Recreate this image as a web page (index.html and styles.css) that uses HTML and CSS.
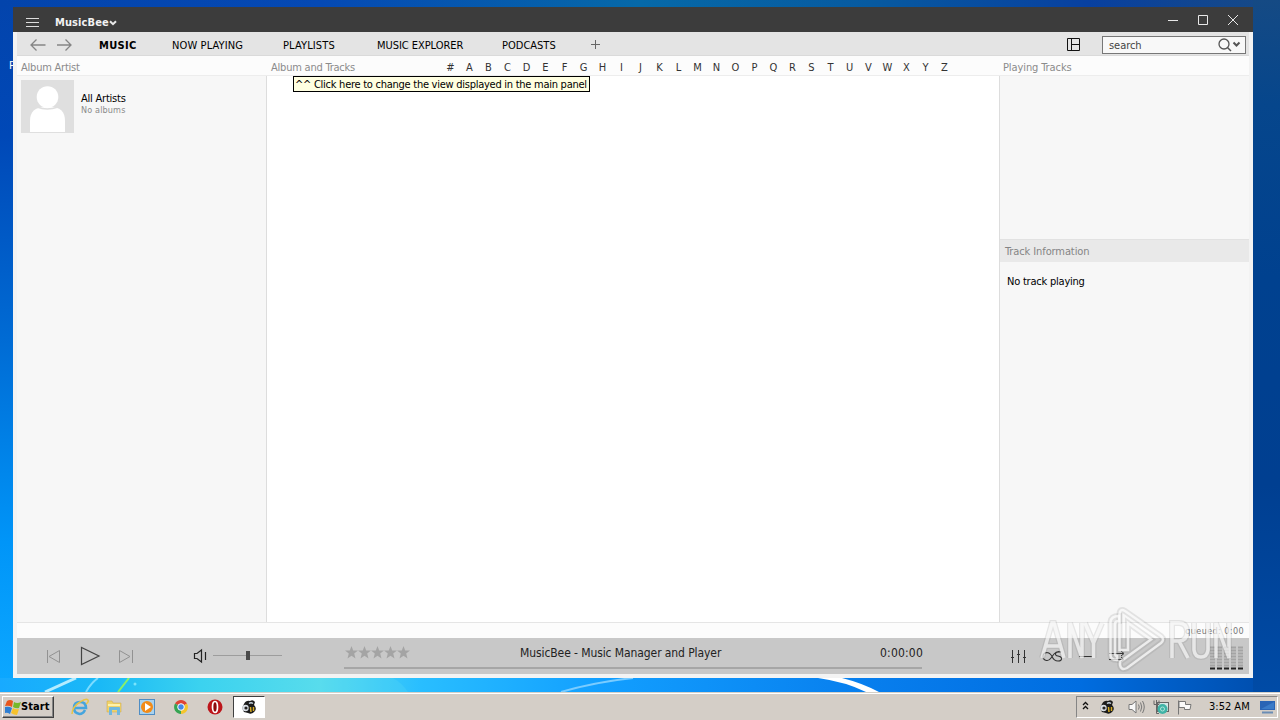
FILE: index.html
```html
<!DOCTYPE html>
<html lang="en">
<head>
    <meta charset="UTF-8">
    <title>MusicBee</title>
    <link rel="stylesheet" href="styles.css">
</head>
<body>
    <div class="desktop">
        <div class="edge edge-left"></div>
        <div class="edge edge-top"></div>
        <div class="edge edge-right"></div>
        <svg class="streaks" width="1280" height="14" viewBox="0 0 1280 14">
            <path d="M45 14L76 0" stroke="#b4ecff" stroke-width="3"/>
            <path d="M86 14Q91 5 98 0" stroke="#7bdcff" stroke-width="2" fill="none"/>
            <path d="M118 14L129 0" stroke="#8af06a" stroke-width="2"/>
            <circle cx="135" cy="6" r="1.5" fill="#7ae4fc"/>
            <path d="M393 0Q402 5 408 14H320V0Z" fill="#5cdcf4" opacity=".25"/>
            <path d="M561 14Q595 4 633 0" stroke="#7accff" stroke-width="2" fill="none"/>
            <path d="M818 0H842Q862 5 879 14H866Q846 4 818 0Z" fill="#fff"/>
        </svg>
        <span class="desktop-label">P</span>
    </div>

    <div class="window">
        <div class="titlebar">
            <svg class="menu-icon" width="14" height="11" viewBox="0 0 14 11" stroke="#ddd"><path d="M0 1.5H13M0 5.5H13M0 9.5H13"/></svg>
            <span class="app-name">MusicBee</span>
            <svg class="app-caret" width="8" height="6" viewBox="0 0 8 6" fill="none" stroke="#e8e8e8" stroke-width="2"><path d="M1 1.2L4 4.2L7 1.2"/></svg>
            <svg class="win-buttons" width="72" height="12" viewBox="0 0 72 12" fill="none" stroke="#e8e8e8">
                <path d="M0 6.5H10M30.5 1.5H39.5V10.5H30.5ZM60 1L70 11M70 1L60 11"/>
            </svg>
        </div>

        <div class="app">
            <div class="tabs">
                <svg class="nav-arrows" width="42" height="12" viewBox="0 0 42 12" fill="none" stroke="#858585" stroke-width="1.3">
                    <path d="M6.500 .5L1 6L6.500 11.500M1 6H15.500M35.500 .5L41 6L35.500 11.500M41 6H27"/>
                </svg>
                <span class="tab active">MUSIC</span>
                <span class="tab tab-now">NOW PLAYING</span>
                <span class="tab tab-lists">PLAYLISTS</span>
                <span class="tab tab-explorer">MUSIC EXPLORER</span>
                <span class="tab tab-podcasts">PODCASTS</span>
                <svg width="9" height="9" viewBox="0 0 9 9" stroke="#666"><path d="M0 4.500H9M4.500 0V9"/></svg>
                <svg class="layout-icon" width="13" height="13" viewBox="0 0 13 13" fill="none" stroke="#111"><path d="M.5 .5H12.500V12.500H.5ZM4.500 .5V12.500M4.500 6.500H12.500"/></svg>
                <div class="search">
                    <span>search</span>
                    <svg width="23" height="14" viewBox="0 0 23 14" fill="none" stroke="#555">
                        <circle cx="6" cy="6" r="5" stroke-width="1.300"/>
                        <path d="M9.500 9.500L13 13" stroke-width="1.500"/>
                        <path d="M15.500 4.500L18.500 7.500L21.500 4.500" stroke-width="2"/>
                    </svg>
                </div>
            </div>

            <div class="headers">
                <span class="head-artist">Album Artist</span>
                <span class="head-album">Album and Tracks</span>
                <div class="letters">
                    <span>#</span><span>A</span><span>B</span><span>C</span><span>D</span><span>E</span><span>F</span><span>G</span><span>H</span><span>I</span><span>J</span><span>K</span><span>L</span><span>M</span><span>N</span><span>O</span><span>P</span><span>Q</span><span>R</span><span>S</span><span>T</span><span>U</span><span>V</span><span>W</span><span>X</span><span>Y</span><span>Z</span>
                </div>
                <span class="head-playing">Playing Tracks</span>
            </div>

            <div class="panels">
                <div class="artists">
                    <svg class="avatar" width="53" height="53" viewBox="0 0 53 53">
                        <rect width="53" height="53" fill="#dfdfdf"/>
                        <circle cx="26.500" cy="17" r="10.800" fill="#fff"/>
                        <path d="M9 52V41Q9 27 24 27H30Q44 27 44 41V52Z" fill="#fff"/>
                        <path d="M16 27Q26 31 37 27" stroke="#dfdfdf" stroke-width="1.500" fill="none"/>
                    </svg>
                    <div class="artist">
                        <span class="artist-name">All Artists</span>
                        <span class="artist-count">No albums</span>
                    </div>
                </div>
                <div class="albums"></div>
                <div class="side">
                    <div class="queue"></div>
                    <div class="info-head">Track Information</div>
                    <div class="info-text">No track playing</div>
                </div>
            </div>

            <div class="status">queued: 0:00</div>

            <div class="player">
                <svg class="transport" width="88" height="20" viewBox="0 0 88 20" fill="none">
                    <path d="M1.500 4V17M13.500 4.500V16.500L3 10.500ZM73.500 4.500V16.500L84 10.500ZM86.500 4V17" stroke="#929292"/>
                    <path d="M35.500 1.500V18.500L53 10Z" stroke="#444" stroke-width="1.200"/>
                </svg>
                <svg class="volume" width="90" height="16" viewBox="0 0 90 16" fill="none">
                    <path d="M1.500 5.500H4L8.500 2V14L4 10.500H1.500ZM12.500 4V12" stroke="#222" stroke-width="1.200"/>
                    <path d="M20 7.500H89" stroke="#9d9d9d"/>
                    <rect x="53" y="3" width="4" height="9" fill="#4a4a4a"/>
                </svg>
                <div class="now">
                    <div class="now-row">
                        <svg width="66" height="14" viewBox="0 0 66 14" fill="#a4a4a4">
                            <defs><path id="star" d="M6.500 0L8.200 4.600H13L9.200 7.600L10.500 12.500L6.500 9.700L2.500 12.500L3.800 7.600L0 4.600H4.800Z"/></defs>
                            <use href="#star"/><use href="#star" x="13"/><use href="#star" x="26"/><use href="#star" x="39"/><use href="#star" x="52"/>
                        </svg>
                        <span class="now-title">MusicBee - Music Manager and Player</span>
                        <span class="now-time">0:00:00</span>
                    </div>
                    <div class="progress"></div>
                </div>
                <svg class="tools" width="118" height="16" viewBox="0 0 118 16" fill="none" stroke="#333">
                    <path d="M2.500 2V15M8.500 2V15M14.500 2V15M1 9.500H4M7 6.500H10M13 9.500H16"/>
                    <path d="M51 4Q47 2.500 44 6L41 10Q39 13 36.500 12.500Q33 12 33 8.500Q33 5 36.500 4.500Q40 4.500 42 8.500Q44 13 48 13Q52 13 51.500 10Q51 8.500 48 8Q45 7.500 45.500 5.500Q46 3.500 51 4" stroke-width="1.100"/>
                    <path d="M69 8.500H82M99 5.500H113M99 11.500H113M111 3L114 5.500L111 8M111 9L114 11.500L111 14"/>
                </svg>
                <svg class="meter" width="34" height="25" viewBox="0 0 34 25" fill="none">
                    <path d="M0 2.500H34M0 5.500H34M0 8.500H34M0 11.500H34M0 14.500H34M0 17.500H34M0 20.500H34" stroke="#a4a4a4" stroke-width="2" stroke-dasharray="5 2"/>
                    <path d="M0 23.500H34" stroke="#222" stroke-width="2" stroke-dasharray="5 2"/>
                </svg>
            </div>
        </div>
    </div>

    <div class="tooltip">^^ Click here to change the view displayed in the main panel</div>

    <svg class="watermark" width="206" height="76" viewBox="0 0 206 76" fill="none">
        <defs>
            <g id="mark">
                <path d="M3 56L13 21H15L25 56M7 44H21M31 56V21L43 56V21M46 21L54.500 41L63 21M54.500 41V56"/>
                <path d="M133 56V21H140Q148 21 148 30Q148 39 140 39H133M140 39L149 56M155 21V48Q156 55 162 55Q168 55 169 48V21M177 56V21L190 56V21"/>
            </g>
            <g id="play">
                <path d="M80 19V14Q72 14 71.500 20V53Q71.500 58 78 58V54Q76 54 76 51V22Q76 19 80 19Z"/>
                <path d="M80.500 48V12Q81 6 86 9L122 34Q126 37.500 122 41L88 66Q82 69 81 63V60L112 37.500L89 21V48Z"/>
            </g>
        </defs>
        <g stroke="#777" stroke-opacity=".17" stroke-width="6"><use href="#mark"/><use href="#play"/></g>
        <use href="#mark" stroke="#fff" stroke-opacity=".65" stroke-width="3.500"/>
        <use href="#play" stroke="#fff" stroke-opacity=".72" stroke-width="2.500"/>
    </svg>

    <div class="taskbar">
        <div class="start">
            <svg width="16" height="16" viewBox="0 0 16 16">
                <path d="M2 2Q5 0 8 2L7 8Q4 6 0 7Z" fill="#e8561c"/>
                <path d="M9 3Q12 5 16 3L14 9Q11 10 8 8Z" fill="#76b82c"/>
                <path d="M0 8Q4 7 7 9L5 15Q2 13 0 14Z" fill="#2e7ed2"/>
                <path d="M8 9Q11 11 14 10L12 16Q9 16 6 14Z" fill="#f6c22c"/>
            </svg>
            <span>Start</span>
        </div>
        <div class="pinned">
            <svg width="18" height="18" viewBox="0 0 18 18" fill="none">
                <path d="M14 12Q12 16 8.500 16Q3 15 3 10Q3 4 9 4Q15 4 15 10H4" stroke="#45a5de" stroke-width="2.600"/>
                <path d="M1 16Q1 9 9 4Q15 0 17 2Q18 4 15 6" stroke="#e8c446" stroke-width="1.500"/>
            </svg>
            <svg width="18" height="18" viewBox="0 0 18 18">
                <path d="M2 3H7L8 5H16V14H2Z" fill="#f0d36b" stroke="#cda640" stroke-width=".5"/>
                <path d="M3 7H15" stroke="#fff2aa" stroke-width="2"/>
                <path d="M4 17V10Q4 9 5 9H14Q15 9 15 10V17H12V12H7V17Z" fill="#71b8df"/>
            </svg>
            <svg width="18" height="18" viewBox="0 0 18 18">
                <rect x="1.500" y="1.500" width="15" height="15" fill="#a9d2ee" stroke="#4f8dc4"/>
                <circle cx="9" cy="9" r="6" fill="#f28b18"/>
                <path d="M7 5L13 9L7 13Z" fill="#fff"/>
            </svg>
            <svg width="18" height="18" viewBox="0 0 18 18">
                <path d="M9 9L3 5.500A7 7 0 0 1 15 5.500Z" fill="#de4435"/>
                <path d="M9 9L3 5.500A7 7 0 0 0 9 16Z" fill="#36a452"/>
                <path d="M9 9L15 5.500A7 7 0 0 1 9 16Z" fill="#f4c52d"/>
                <circle cx="9" cy="9" r="3.300" fill="#4389e8" stroke="#fff"/>
            </svg>
            <svg width="18" height="18" viewBox="0 0 18 18">
                <circle cx="9" cy="9" r="7.500" fill="#bd151a"/>
                <ellipse cx="9" cy="9" rx="2.500" ry="5.500" fill="#8e090d" stroke="#fff" stroke-width="1.700"/>
            </svg>
        </div>
        <div class="task">
            <svg width="16" height="16" viewBox="0 0 16 16">
                <g id="bee">
                    <path d="M3 5Q5 1 9 2Q12 0 14 3L13 6Q16 9 14 12Q11 16 7 14L3 13Q0 9 3 5Z" fill="#1b1b1b"/>
                    <circle cx="4.500" cy="9" r="3.200" fill="#d9dee4"/>
                    <circle cx="5" cy="9" r="1.600" fill="#222"/>
                    <path d="M9.500 8L10 13M12.500 8L12.500 12" stroke="#d6ab24" stroke-width="1.500"/>
                    <path d="M8 4.500Q10 3 12 4.500" stroke="#c7d4e0" stroke-width="1.500" fill="none"/>
                </g>
            </svg>
        </div>
        <div class="tray">
            <svg class="tray-more" width="7" height="9" viewBox="0 0 7 9" fill="none" stroke="#111" stroke-width="1.300"><path d="M1 4L3.500 1.500L6 4M1 8L3.500 5.500L6 8"/></svg>
            <svg class="tray-bee" width="16" height="16" viewBox="0 0 16 16"><use href="#bee"/></svg>
            <svg class="tray-sound" width="17" height="14" viewBox="0 0 17 14" fill="none" stroke="#777">
                <path d="M1 4.500H4L8 1V13L4 9.500H1Z" fill="#f8f8f8"/>
                <path d="M10.500 4.500Q12 7 10.500 9.500M12.500 2.500Q15 7 12.500 11.500M14.500 1Q18 7 14.500 13"/>
            </svg>
            <svg class="tray-net" width="16" height="16" viewBox="0 0 16 16" fill="none">
                <rect x="4.500" y="3.500" width="11" height="9" fill="#d5e7e6" stroke="#666"/>
                <circle cx="9.500" cy="10" r="5" fill="#3fb3a6"/>
                <circle cx="9.500" cy="10" r="2" stroke="#b0e4da"/>
                <path d="M1 1.500V5.500H6V1.500M3.500 1V5M3.500 6V14.500H6" stroke="#666"/>
            </svg>
            <svg class="tray-flag" width="15" height="15" viewBox="0 0 15 15" fill="#fafafa" stroke="#777"><path d="M1.500 .5V14.500M2 1.500H8.500V4.500H14L13 9.500H7.500V7.500H2Z"/></svg>
            <span class="clock">3:52 AM</span>
            <svg class="tray-desk" width="15" height="13" viewBox="0 0 15 13"><path d="M0 0H15V9H0Z" fill="#2a64b5"/><path d="M1 8L14 1V8Z" fill="#3b7bc8"/><path d="M2 11.500H13" stroke="#6a8db4" stroke-width="2"/></svg>
        </div>
    </div>
</body>
</html>
```
FILE: styles.css
```css
body {
    margin: 0;
    width: 1280px;
    height: 720px;
    overflow: hidden;
    position: relative;
    font-family: "DejaVu Sans Condensed", "DejaVu Sans", sans-serif;
    font-stretch: condensed;
    font-size: 11px;
    line-height: 14px;
    letter-spacing: -0.22px;
    color: #111;
    white-space: nowrap;
}
svg {
    display: block;
    flex: none;
}
/* desktop */
.desktop {
    position: absolute;
    inset: 0;
    background: linear-gradient(to right, #18aaff 0, #1ab9f6 100px, #3bd2ef 200px, #58dcec 320px, #29beff 420px, #129fff 600px, #087fee 860px, #006de0 1080px, #004ba9 1280px);
}
.edge {
    position: absolute;
}
.edge-left {
    left: 0;
    top: 0;
    width: 13px;
    height: 678px;
    background: linear-gradient(#0344ac, #0048b7 20%, #006bd4 50%, #0095f8 80%, #0ca7ff);
}
.edge-top {
    left: 0;
    top: 0;
    width: 1280px;
    height: 7px;
    background: linear-gradient(to right, #0344ac, #0549b4 25%, #0669a8 50%, #075aa0 68%, #0840a0 85%, #174a84);
}
.edge-right {
    left: 1253px;
    top: 0;
    width: 27px;
    height: 692px;
    background: linear-gradient(#154a84, #06468c 15%, #00418f 40%, #003f91 70%, #004ba6);
}
.streaks {
    position: absolute;
    left: 0;
    top: 678px;
}
.desktop-label {
    position: absolute;
    left: 9px;
    top: 59px;
    color: #fff;
}
/* window */
.window {
    position: absolute;
    left: 13px;
    top: 7px;
    width: 1240px;
    height: 671px;
    background: #f3f3f3;
}
.titlebar {
    display: flex;
    align-items: center;
    height: 25px;
    padding: 5px 13px 0 13px;
    box-sizing: border-box;
    background: #3c3c3c;
    color: #f2f2f2;
}
.app-name {
    margin-left: 15px;
    width: 54px;
    padding-top: 1px;
    font-weight: bold;
    letter-spacing: 0.1px;
}
.app-caret {
    margin-top: 1px;
}
.win-buttons {
    margin-left: auto;
    margin-bottom: 5px;
}
.app {
    margin: 0 4px;
}
.tabs {
    display: flex;
    align-items: center;
    height: 24px;
    padding: 2px 3px 0 13px;
    box-sizing: border-box;
    background: #e4e4e4;
    border-bottom: 1px solid #dadada;
    color: #000;
}
.tab {
    width: 73px;
    padding-top: 2px;
    letter-spacing: 0;
}
.active {
    margin-left: 27px;
    font-weight: bold;
    letter-spacing: 0.3px;
}
.tab-now {
    width: 111px;
    letter-spacing: 0.12px;
}
.tab-lists {
    width: 94px;
    letter-spacing: 0.12px;
}
.tab-explorer {
    width: 125px;
    letter-spacing: -0.05px;
}
.tab-podcasts {
    width: 89px;
}
.layout-icon {
    margin-left: auto;
}
.search {
    display: flex;
    align-items: center;
    justify-content: space-between;
    width: 144px;
    height: 18px;
    margin-left: 22px;
    padding: 0 4px 0 6px;
    box-sizing: border-box;
    border: 1px solid #777;
    background: #f8f8f8;
    letter-spacing: -0.05px;
    color: #444;
}
.search span {
    padding-top: 2px;
}
.headers {
    display: flex;
    align-items: center;
    height: 20px;
    padding: 5px 0 0 4px;
    box-sizing: border-box;
    background: #fcfcfc;
    border-bottom: 1px solid #ededed;
    color: #8b8b8b;
}
.head-artist {
    width: 250px;
}
.head-album {
    width: 170px;
}
.letters {
    display: grid;
    grid-template-columns: repeat(27, 19px);
    letter-spacing: 0;
    color: #333;
    text-align: center;
}
.head-playing {
    margin-left: 49px;
    letter-spacing: -0.1px;
}
.panels {
    display: flex;
    height: 546px;
}
.artists {
    display: flex;
    align-items: flex-start;
    width: 250px;
    padding: 4px;
    box-sizing: border-box;
    background: #f7f7f7;
    border-right: 1px solid #ddd;
}
.artist {
    display: flex;
    flex-direction: column;
    margin: 12px 0 0 7px;
    color: #000;
}
.artist-count {
    font-size: 9px;
    line-height: 9px;
    letter-spacing: 0.15px;
    color: #8b8b8b;
}
.albums {
    width: 732px;
    background: #fff;
}
.side {
    width: 250px;
    box-sizing: border-box;
    background: #f7f7f7;
    border-left: 1px solid #ddd;
}
.queue {
    height: 163px;
}
.info-head {
    height: 23px;
    padding-left: 5px;
    box-sizing: border-box;
    border-top: 1px solid #e2e2e2;
    background: #e9e9e9;
    line-height: 23px;
    letter-spacing: -0.1px;
    color: #858585;
}
.info-text {
    padding: 13px 0 0 7px;
    color: #000;
}
.status {
    height: 16px;
    padding: 1px 5px 0 0;
    box-sizing: border-box;
    border-top: 1px solid #e5e5e5;
    background: #fcfcfc;
    font-size: 9px;
    letter-spacing: 0.4px;
    text-align: right;
    color: #777;
}
.player {
    display: flex;
    height: 36px;
    background: #c8c8c8;
}
.transport {
    margin: 8px 0 0 29px;
}
.volume {
    margin: 10px 0 0 59px;
}
.now {
    width: 578px;
    margin-left: 61px;
}
.now-row {
    display: flex;
    align-items: center;
    height: 29px;
    padding-left: 1px;
    font-size: 12px;
    letter-spacing: -0.09px;
    color: #222;
}
.now-title {
    margin-left: 109px;
}
.now-time {
    margin-left: auto;
    margin-right: -1px;
    letter-spacing: 0.2px;
}
.progress {
    height: 2px;
    background: #a6a6a6;
}
.tools {
    margin: 10px 0 0 88px;
}
.meter {
    margin: 7px 0 0 82px;
}
.tooltip {
    position: absolute;
    left: 293px;
    top: 76px;
    width: 297px;
    height: 16px;
    padding-left: 1px;
    box-sizing: border-box;
    border: 1px solid #000;
    background: #ffffe1;
    line-height: 15px;
    letter-spacing: -0.26px;
    color: #000;
}
.watermark {
    position: absolute;
    left: 1039px;
    top: 602px;
}
/* taskbar */
.taskbar {
    position: absolute;
    left: 0;
    top: 692px;
    width: 1280px;
    height: 28px;
    display: flex;
    align-items: center;
    padding: 1px 2px 0;
    box-sizing: border-box;
    border-top: 1px solid #d4d0c8;
    background: #d4cec7;
    box-shadow: inset 0 1px #fff;
    letter-spacing: 0;
    color: #000;
}
.start {
    display: flex;
    align-items: center;
    width: 52px;
    height: 22px;
    padding-left: 2px;
    box-sizing: border-box;
    border: 1px solid;
    border-color: #fff #404040 #404040 #fff;
    box-shadow: inset -1px -1px #858585;
    font-weight: bold;
    letter-spacing: 0.1px;
}
.pinned {
    display: flex;
    margin-left: 17px;
    gap: 15.7px;
}
.task {
    display: flex;
    align-items: center;
    justify-content: center;
    width: 32px;
    height: 22px;
    margin-left: 9px;
    box-sizing: border-box;
    border: 1px solid;
    border-color: #404040 #fff #fff #404040;
    background: #fff;
}
.tray {
    display: flex;
    align-items: center;
    width: 202px;
    height: 22px;
    margin-left: auto;
    padding-left: 5px;
    box-sizing: border-box;
    border: 1px solid;
    border-color: #858585 #fff #fff #858585;
}
.tray-more {
    margin-bottom: 3px;
}
.tray-bee {
    margin-left: 10px;
}
.tray-sound {
    margin-left: 13px;
}
.tray-net {
    margin-left: 8px;
}
.tray-flag {
    margin-left: 8px;
}
.clock {
    width: 41px;
    margin-left: 17px;
}
.tray-desk {
    margin-left: 10px;
}
```
